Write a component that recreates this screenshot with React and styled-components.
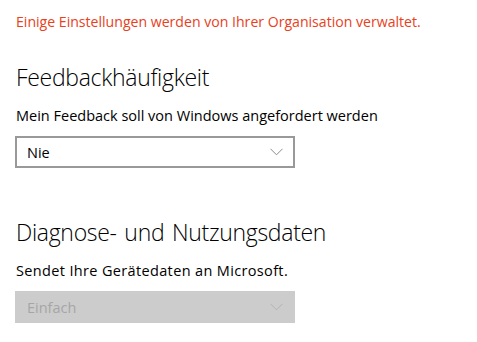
import React from 'react'
import styled, { createGlobalStyle } from 'styled-components'

const GlobalStyle = createGlobalStyle`
  html, body {
    margin: 0;
    padding: 0;
    background: #ffffff;
  }
  body {
    font-family: 'Open Sans', 'Noto Sans', sans-serif;
    color: #000000;
  }
`

const Page = styled.div`
  width: 477px;
  height: 342px;
  box-sizing: border-box;
  padding: 12px 0 0 15px;
  display: flex;
  flex-direction: column;
  overflow: hidden;
`

const Notice = styled.div`
  color: #e8411c;
  font-size: 14.1px;
  line-height: 20px;
  padding-left: 1px;
`

const Heading = styled.h2`
  margin: ${p => p.$top}px 0 0 0;
  padding-left: 1px;
  font-size: 23px;
  font-weight: 300;
  line-height: 30px;
  color: #000000;
  letter-spacing: -0.3px;
  word-spacing: 2px;
`

const Label = styled.div`
  margin-top: ${p => p.$top}px;
  padding-left: 1px;
  font-size: 14.5px;
  line-height: 20px;
  letter-spacing: ${p => p.$spacing || 0}px;
  color: #000000;
`

const Select = styled.div`
  margin-top: 10px;
  width: 280px;
  height: 32px;
  box-sizing: border-box;
  border: 2px solid ${p => (p.$disabled ? '#cccccc' : '#999999')};
  background: ${p => (p.$disabled ? '#cccccc' : '#ffffff')};
  color: ${p => (p.$disabled ? '#a6a6a6' : '#000000')};
  display: flex;
  align-items: center;
  justify-content: space-between;
  padding: 0 10px 0 10px;
  font-size: 14.5px;
`

const Chevron = ({ color }) => (
  <svg width="13" height="8" viewBox="0 0 13 8">
    <path d="M0.5 0.8 L6.5 6.8 L12.5 0.8" fill="none" stroke={color} strokeWidth="1" />
  </svg>
)

export default function App() {
  return (
    <>
      <GlobalStyle />
      <Page>
        <Notice>Einige Einstellungen werden von Ihrer Organisation verwaltet.</Notice>
        <Heading $top={30}>Feedbackhäufigkeit</Heading>
        <Label $top={14}>Mein Feedback soll von Windows angefordert werden</Label>
        <Select>
          <span>Nie</span>
          <Chevron color="#8a8a8a" />
        </Select>
        <Heading $top={49}>Diagnose- und Nutzungsdaten</Heading>
        <Label $top={14} $spacing={0.35}>Sendet Ihre Gerätedaten an Microsoft.</Label>
        <Select $disabled>
          <span>Einfach</span>
          <Chevron color="#b3b3b3" />
        </Select>
      </Page>
    </>
  )
}
